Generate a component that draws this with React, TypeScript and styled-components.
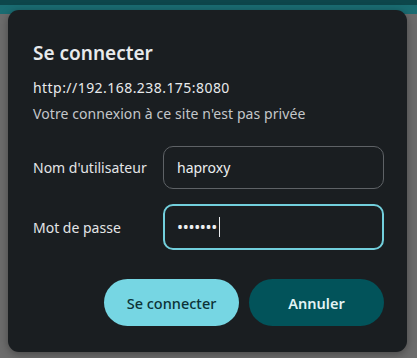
import styled, { createGlobalStyle } from 'styled-components';

const GlobalStyle = createGlobalStyle`
  html, body {
    margin: 0;
    padding: 0;
    background: #6c6c6c;
    font-family: 'Noto Sans', 'Open Sans', sans-serif;
  }
`;

const Page = styled.div`
  position: relative;
  width: 417px;
  height: 358px;
  overflow: hidden;
  background: #6c6c6c;
`;

const TopBar = styled.div`
  height: 14px;
  background: linear-gradient(#0d464b 0 5px, #1a6c72 5px 14px);
`;

// modal sits over the page
const Dialog = styled.div`
  position: absolute;
  top: 10px;
  left: 8px;
  width: 399px;
  height: 342px;
  box-sizing: border-box;
  padding: 30px 23px 0 25px;
  background: #1a1e21;
  border-radius: 11px;
  box-shadow: 0 2px 8px rgba(0, 0, 0, 0.35);
  color: #e6e8ea;
  display: flex;
  flex-direction: column;
`;

const Title = styled.h1`
  margin: 0;
  font-size: 19px;
  font-weight: 600;
  line-height: 26px;
  color: #e8eaec;
`;

const Url = styled.div`
  margin-top: 12px;
  font-size: 14px;
  line-height: 20px;
  letter-spacing: 0.45px;
  color: #e8eaec;
`;

const Note = styled.div`
  margin-top: 6px;
  font-size: 14px;
  line-height: 20px;
  letter-spacing: 0.08px;
  color: #c4c7ca;
`;

const Form = styled.div`
  margin-top: 22px;
  display: grid;
  grid-template-columns: 130px 1fr;
  row-gap: 15px;
  align-items: center;
`;

const Label = styled.label`
  font-size: 14px;
  color: #e3e5e7;
`;

const Field = styled.div<{ $focused?: boolean }>`
  height: ${({ $focused }) => ($focused ? '46px' : '43px')};
  box-sizing: border-box;
  border-radius: 10px;
  border: ${({ $focused }) => ($focused ? '2px solid #72cfdc' : '1px solid #5e6266')};
  padding-left: ${({ $focused }) => ($focused ? '12px' : '13px')};
  display: flex;
  align-items: center;
  font-size: 14px;
  color: #eceef0;
`;

const Dots = styled.span`
  font-size: 16px;
  letter-spacing: -0.3px;
`;

const Caret = styled.span`
  display: inline-block;
  width: 1px;
  height: 20px;
  margin-left: 2px;
  background: #e8eaec;
`;

const Actions = styled.div`
  margin-top: 29px;
  display: flex;
  justify-content: flex-end;
  gap: 10px;
`;

const Button = styled.button<{ $primary?: boolean }>`
  width: 135px;
  height: 47px;
  border: none;
  border-radius: 24px;
  font-family: inherit;
  font-size: 14.5px;
  font-weight: ${({ $primary }) => ($primary ? 500 : 600)};
  background: ${({ $primary }) => ($primary ? '#76d6e3' : '#02535a')};
  color: ${({ $primary }) => ($primary ? '#0c3337' : '#e2f3f5')};
`;

export default function App() {
  return (
    <>
      <GlobalStyle />
      <Page>
        <TopBar />
        <Dialog>
          <Title>Se connecter</Title>
          <Url>http://192.168.238.175:8080</Url>
          <Note>Votre connexion à ce site n'est pas privée</Note>
          <Form>
            <Label>Nom d'utilisateur</Label>
            <Field>haproxy</Field>
            <Label>Mot de passe</Label>
            <Field $focused>
              <Dots>•••••••</Dots>
              <Caret />
            </Field>
          </Form>
          <Actions>
            <Button $primary>Se connecter</Button>
            <Button>Annuler</Button>
          </Actions>
        </Dialog>
      </Page>
    </>
  );
}
